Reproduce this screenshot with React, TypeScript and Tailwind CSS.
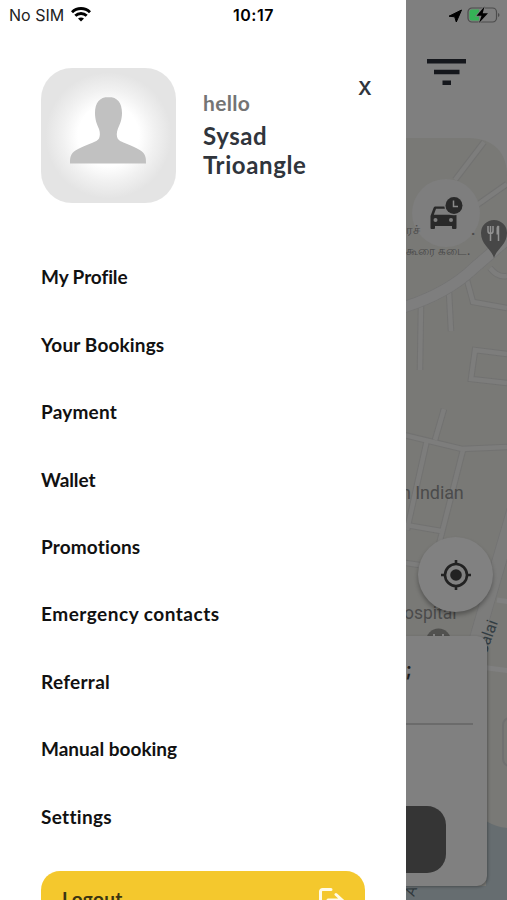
import clsx from 'clsx'

const menuItems = [
  { label: 'My Profile', tracking: 'tracking-[-0.1px]' },
  { label: 'Your Bookings', tracking: 'tracking-[0.15px]' },
  { label: 'Payment', tracking: 'tracking-[0.2px]' },
  { label: 'Wallet', tracking: 'tracking-[-0.1px]' },
  { label: 'Promotions', tracking: 'tracking-[0.15px]' },
  { label: 'Emergency contacts', tracking: 'tracking-[0.5px]' },
  { label: 'Referral', tracking: 'tracking-[0.3px]' },
  { label: 'Manual booking', tracking: 'tracking-[0px]' },
  { label: 'Settings', tracking: 'tracking-[0.3px]' },
]

function WifiIcon() {
  return (
    <svg width="20" height="15" viewBox="0 0 20 15" fill="none" stroke="#000" strokeWidth="2.9">
      <path d="M1 5.2C6 .3 14 .3 19 5.2" />
      <path d="M4.3 8.8c3.2-3.1 8.2-3.1 11.4 0" />
      <path d="M10 14.6 7 11.6c1.7-1.5 4.3-1.5 6 0z" fill="#000" stroke="none" />
    </svg>
  )
}

function StatusBar() {
  return (
    <div className="absolute inset-x-0 top-0 z-10 flex h-[29px] items-center font-['Inter',sans-serif] text-black">
      <div className="flex w-[233px] items-center gap-[6px] pl-[9px]">
        <span className="w-[56px] whitespace-nowrap text-[16px] text-[#222]">No SIM</span>
        <WifiIcon />
      </div>
      <span className="w-[216px] whitespace-nowrap text-[16px] font-semibold tracking-[0.5px]">10:17</span>
      <svg width="52" height="20" viewBox="449 4 52 20" className="shrink-0">
        <path d="M449 15.2 461.5 9l-5.2 12-1.6-5.2z" fill="#000" stroke="#000" strokeLinejoin="round" />
        <rect x="468" y="7" width="28.5" height="14" rx="4" fill="none" stroke="#4c4c4c" strokeWidth="1.2" />
        <path d="M472 8.5h7v11h-7a2.5 2.5 0 0 1-2.5-2.5v-6a2.5 2.5 0 0 1 2.5-2.5" fill="#35b356" />
        <path d="M498 12v4c2-.7 2-3.3 0-4" fill="#4c4c4c" />
        <path d="m484.500 5.500-8 9.300h5l-2.500 7.200 9-9.700h-5.300z" fill="#000" stroke="#7f7f7f" strokeWidth="1.600" paintOrder="stroke" />
      </svg>
    </div>
  )
}

function Avatar() {
  return (
    <div className="h-[135px] w-[135px] shrink-0 overflow-hidden rounded-[31px] bg-[radial-gradient(circle,#fff_0%,#fff_32%,#f1f1f1_48%,#e4e4e4_66%)]">
      <svg width="135" height="135" viewBox="0 0 135 135">
        <path
          d="M67.500 29C58.500 29 54 35 54 45c0 7 2 11.500 4 16 1.300 4 1 7 0 9.500-1.200 2-3.500 3-6.500 4.200C43 78 35 81 31.500 85 29 88.500 29 91 29 95.500h76c0-4.500 0-7-2.500-10.500C99 81 91.500 78 83 74.700c-3-1.200-5.200-2.200-6.400-4.200-1-2.500-1.200-5.500.2-9.500 2-4.500 4.200-9 4.200-16 0-10-4.500-16-13.500-16"
          fill="#c1c1c1"
        />
      </svg>
    </div>
  )
}

function Drawer() {
  return (
    <aside className="flex h-full w-[406px] shrink-0 flex-col bg-white px-[41px] pt-[68px] font-['Lato',sans-serif] font-bold">
      <header className="flex h-[176px] shrink-0">
        <Avatar />
        <div className="ml-[27px] w-[120px] shrink-0 pt-[22px]">
          <p className="text-[21px] leading-[26px] tracking-[0.3px] text-[#747474]">hello</p>
          <h1 className="mt-[5px] text-[24px] leading-[29px] tracking-[0.6px] text-[#30353c]">
            Sysad
            <br />
            Trioangle
          </h1>
        </div>
        <button type="button" className="mt-[9px] ml-[35px] h-[24px] font-['Inter',sans-serif] text-[19px] leading-[24px] font-semibold text-[#30353c]">
          X
        </button>
      </header>
      <nav className="flex shrink-0 flex-col">
        {menuItems.map((item) => (
          <a key={item.label} className={clsx('flex h-[67.4px] shrink-0 items-center text-[19px] whitespace-nowrap text-[#111]', item.tracking)}>
            {item.label}
          </a>
        ))}
      </nav>
      <button type="button" className="mt-[20px] flex h-[60px] w-[324px] shrink-0 items-start justify-between rounded-[19px] bg-[#f4c82d] pt-[15px] pr-[20px] pl-[21px] text-[19px] text-[#3b3512]">
        <span className="-mt-px tracking-[0.3px]">Logout</span>
        <svg width="27" height="26" viewBox="0 0 27 26" fill="none" stroke="#fffbe8" strokeWidth="3" strokeLinecap="round">
          <path d="M13 3.500H4.500a2 2 0 0 0-2 2V23" />
          <path d="M10 14h13M18 8.500l6 5.500-6 6" />
        </svg>
      </button>
    </aside>
  )
}

const roads = [
  'M484 142 455 180',
  'M507 184 477 205',
  'M421 304 420 370',
  'M449 292 451 331',
  'M467 280 473 302 507 308',
  'M507 354 475 350 471 379 507 383',
  'M490 268Q498 278 507 276',
  'M444 409 435 440',
  'M427 440 407 530',
  'M463 450 435 560',
  'M400 434 462 449 507 447',
  'M400 524 441 531',
  'M400 562 426 566',
]

function MapCanvas() {
  return (
    <svg className="absolute inset-0" width="101" height="900" viewBox="406 0 101 900" fill="none">
      <path d="M406 138h62c25 0 39 14 39 38v724H406z" fill="#797976" />
      <g stroke="#727271" strokeWidth="6.500">
        {roads.map((d) => (
          <path key={d} d={d} />
        ))}
      </g>
      <g stroke="#7d7d7c" strokeWidth="4.500">
        {roads.map((d) => (
          <path key={d} d={d} />
        ))}
      </g>
      <path d="M398 309Q446 295 474 268L511 236" stroke="#747474" strokeWidth="12" />
      <path d="M398 309Q446 295 474 268L511 236" stroke="#7e7e7e" strokeWidth="10.500" />
      <path d="m514 510-48 165" stroke="#737373" strokeWidth="15" />
      <path d="m514 510-48 165" stroke="#7c7c7b" strokeWidth="13.500" />
      <path d="m480 667 30 4M497 600l14 2" stroke="#808080" strokeWidth="5" />
      <path d="M511 718q-8 0-8 8v32q0 8 8 8" stroke="#707070" strokeWidth="2" />
      <path d="M486 821q10 6 21 7v72H406v-14h80z" fill="#666d70" />
      <path d="M494 258c-3-10-13-13-13-25a13 13 0 0 1 26 0c0 12-10 15-13 25" fill="#474747" />
      <path d="M488 226v5q0 2.500 2.500 2.500v7.500m2.500-15v5q0 2.500-2.500 2.500m0-7.500v7.500m8-7.500v15" stroke="#929292" strokeWidth="1.500" />
      <path d="M498.500 225.500v9h-2v-6q0-3 2-3" fill="#929292" />
      <circle cx="438.500" cy="641" r="12.500" fill="#51514f" />
      <path d="M434 639v-5m9 5v-5" stroke="#858585" strokeWidth="2" />
    </svg>
  )
}

function MapPanel() {
  return (
    <main className="relative h-full w-[101px] shrink-0 overflow-hidden bg-[#7f7f7f] font-['Roboto',sans-serif] text-[#4b4b4b]">
      <MapCanvas />
      <svg className="absolute top-[58px] left-[21px]" width="40" height="28" viewBox="0 0 40 28" fill="#15171c">
        <path d="M0 1h39v4.500H0zM7 11.800h25.500v4.500H7zM15.500 22.500H24V27h-8.500z" />
      </svg>

      {/* schedule ride */}
      <div className="absolute top-[179px] left-[6px] h-[68px] w-[68px] rounded-full bg-[#7e7e7e]">
        <svg className="absolute top-[17px] left-[17px]" width="35" height="34" viewBox="0 0 35 34">
          <path d="M6 10.500h16.500l5 8.500v13q0 1-1 1h-2.500q-1 0-1-1v-2H6v2q0 1-1 1H2.500q-1 0-1-1V20l3-8q.4-1.500 1.500-1.500" fill="#292929" />
          <path d="M7 12.800h14l2 6H4.800z" fill="#7e7e7e" />
          <circle cx="25" cy="9.500" r="9.800" fill="#7e7e7e" />
          <circle cx="25" cy="9.500" r="8.500" fill="#292929" />
          <path d="M24.500 4.500v6h4.500" stroke="#8a8a8a" strokeWidth="1.500" fill="none" />
          <circle cx="6.500" cy="24" r="2" fill="#7e7e7e" />
          <circle cx="22" cy="24" r="2" fill="#7e7e7e" />
        </svg>
      </div>
      <span className="absolute top-[220px] left-0 text-[13px] leading-[20px] font-medium">ரச்</span>
      <span className="absolute top-[221px] left-[65px] text-[15px] leading-[18px] font-bold">.</span>
      <span className="absolute top-[243px] left-0 text-[12px] leading-[16px] font-medium whitespace-nowrap">கூரை கடை.</span>
      <span className="absolute top-[482px] -left-[5px] text-[18px] leading-[22px] tracking-[-0.1px] whitespace-nowrap">n Indian</span>
      <span className="absolute top-[602px] left-[-2px] text-[17.5px] leading-[22px]">ospital</span>
      <span className="absolute top-[628px] left-[64px] -rotate-70 text-[16px] leading-[18px] text-[#333d43]">Salai</span>
      <span className="absolute top-[882px] left-0 -rotate-70 text-[15px] leading-[18px] text-[#2f383c]">A</span>

      <div className="absolute top-[537px] left-[12px] flex h-[75px] w-[75px] items-center justify-center rounded-full bg-[#818181] shadow-[0_3px_4px_rgba(0,0,0,0.3)]">
        <svg width="30" height="30" viewBox="0 0 30 30" fill="none" stroke="#222" strokeWidth="2.600">
          <circle cx="15" cy="15" r="11" />
          <circle cx="15" cy="15" r="5.800" fill="#222" stroke="none" />
          <path d="M15 0v4M15 26v4M0 15h4M26 15h4" />
        </svg>
      </div>

      <section className="absolute top-[636px] right-[20px] h-[250px] w-[140px] rounded-[10px] bg-[#808080] shadow-[1px_1px_3px_rgba(0,0,0,0.3)]">
        <p className="mt-[22px] pr-[75px] text-right font-['Inter',sans-serif] text-[19px] leading-[24px] font-semibold text-[#1d1d1d]">;</p>
        <div className="mt-[41px] mr-[14px] border-t-2 border-[#6b6b6b]" />
        <div className="mt-[81px] mr-[41px] h-[67px] rounded-[19px] bg-[#353535]" />
      </section>
    </main>
  )
}

export default function App() {
  return (
    <div className="relative flex h-[900px] w-[507px] overflow-hidden bg-white">
      <StatusBar />
      <Drawer />
      <MapPanel />
    </div>
  )
}
